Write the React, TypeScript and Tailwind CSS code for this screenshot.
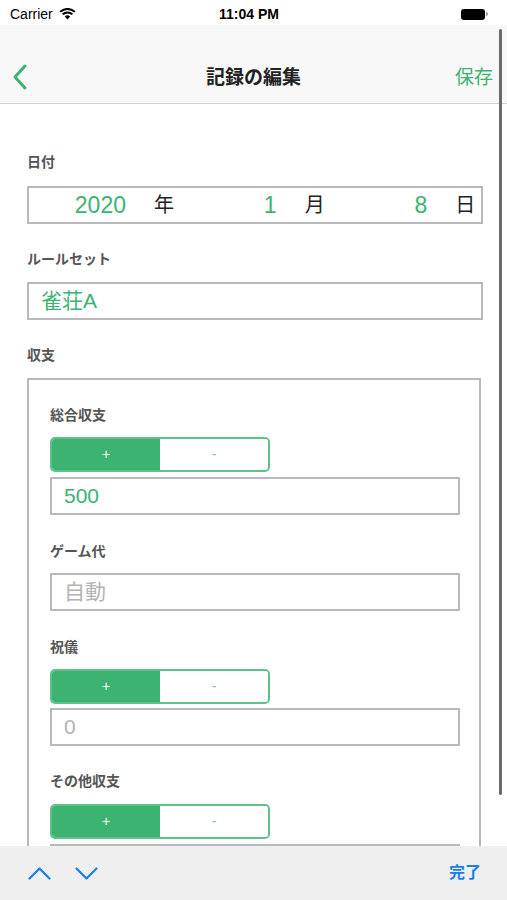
const font = { fontFamily: '"Liberation Sans", "Noto Sans CJK JP", sans-serif' };

function Label({ text }: { text: string }): React.ReactNode {
  return <div className="h-4 text-[14px] leading-4 font-bold text-[#555]">{text}</div>;
}

function Field({ value, placeholder }: { value?: string; placeholder?: string }): React.ReactNode {
  return (
    <div className="flex h-[38px] items-center border-2 border-[#b9b9b9] px-3 text-[21px]">
      {value ? <span className="text-[#3cb371]">{value}</span> : <span className="text-[#b3b3b3]">{placeholder}</span>}
    </div>
  );
}

function Sign(): React.ReactNode {
  return (
    <div className="flex h-[35px] w-[220px] overflow-hidden rounded-[5px] border-2 border-[#5cc28a]">
      <div className="flex flex-1 items-center justify-center bg-[#3cb371] text-[14px] text-white">+</div>
      <div className="flex flex-1 items-center justify-center bg-white text-[14px] text-[#6cc497]">-</div>
    </div>
  );
}

function DatePart({ num, unit }: { num: string; unit: string }): React.ReactNode {
  return (
    <div className="flex items-center">
      <span className="w-[97px] text-right text-[23px] text-[#3cb371]">{num}</span>
      <span className="ml-[28px] text-[20px] text-[#222]">{unit}</span>
    </div>
  );
}

export default function App(): React.ReactNode {
  return (
    <div className="relative flex h-[900px] w-[507px] flex-col overflow-hidden bg-white" style={font}>
      {/* status bar */}
      <div className="flex h-[25px] items-center bg-white px-[10px] pt-[3px] text-[14px] text-black">
        <div className="flex flex-1 items-center gap-[6px]">
          <span>Carrier</span>
          <svg width="17" height="12" viewBox="0 0 17 12">
            <path d="M8.5 11.5 L5.8 8.6 A4 4 0 0 1 11.2 8.6 Z" fill="#000" />
            <path d="M3.6 6.4 A7 7 0 0 1 13.4 6.4" stroke="#000" strokeWidth="2" fill="none" />
            <path d="M1.2 3.9 A10.5 10.5 0 0 1 15.8 3.9" stroke="#000" strokeWidth="2" fill="none" />
          </svg>
        </div>
        <span className="font-bold">11:04 PM</span>
        <div className="flex flex-1 items-center justify-end pr-[9px]">
          <div className="h-[11px] w-[24px] rounded-[3px] bg-black" />
          <div className="ml-[1px] h-[4px] w-[2px] rounded-r-sm bg-[#999]" />
        </div>
      </div>

      {/* nav bar */}
      <div className="border-b border-[#cfcfcf] bg-[#f8f8f8] pt-[31px] pb-[3px]">
        <div className="relative flex h-[44px] items-center px-[12px]">
          <svg width="16" height="26" viewBox="0 0 16 26" className="-mt-[2px] text-[#3cb371]">
            <path d="M13 2 L3 13 L13 24" stroke="currentColor" strokeWidth="3" fill="none" strokeLinecap="round" strokeLinejoin="round" />
          </svg>
          <div className="absolute inset-0 flex items-center justify-center text-[19px] font-bold text-[#222]">記録の編集</div>
          <div className="ml-auto pr-[2px] text-[19px] text-[#3cb371]">保存</div>
        </div>
      </div>

      {/* content */}
      <div className="relative flex-1 overflow-hidden">
        <div className="pt-[50px] pr-[24px] pl-[27px]">
          <Label text="日付" />
          <div className="mt-4 grid h-[38px] grid-cols-3 items-center border-2 border-[#b9b9b9]">
            <DatePart num="2020" unit="年" />
            <DatePart num="1" unit="月" />
            <DatePart num="8" unit="日" />
          </div>

          <div className="mt-[27px]">
            <Label text="ルールセット" />
          </div>
          <div className="mt-[15px]">
            <Field value="雀荘A" />
          </div>

          <div className="mt-[27px]">
            <Label text="収支" />
          </div>
          <div className="mt-[15px] mr-[2px] border-2 border-[#b9b9b9] pt-[27px] pr-[19px] pl-[21px] pb-10">
            <Label text="総合収支" />
            <div className="mt-[14px]">
              <Sign />
            </div>
            <div className="mt-[5px]">
              <Field value="500" />
            </div>

            <div className="mt-[28px]">
              <Label text="ゲーム代" />
            </div>
            <div className="mt-[14px]">
              <Field placeholder="自動" />
            </div>

            <div className="mt-[28px]">
              <Label text="祝儀" />
            </div>
            <div className="mt-[14px]">
              <Sign />
            </div>
            <div className="mt-[4px]">
              <Field placeholder="0" />
            </div>

            <div className="mt-[27px]">
              <Label text="その他収支" />
            </div>
            <div className="mt-[15px]">
              <Sign />
            </div>
            <div className="mt-[5px]">
              <Field placeholder="" />
            </div>
          </div>
        </div>
      </div>

      {/* keyboard toolbar */}
      <div className="flex h-[54px] items-center bg-[#efefef] pr-[26px] pl-[28px]">
        <svg width="23" height="13" viewBox="0 0 23 13" className="text-[#1a7fe8]">
          <path d="M1.5 11.5 L11.5 1.5 L21.5 11.5" stroke="currentColor" strokeWidth="2.2" fill="none" strokeLinecap="round" strokeLinejoin="round" />
        </svg>
        <svg width="23" height="13" viewBox="0 0 23 13" className="ml-[24px] text-[#1a7fe8]">
          <path d="M1.5 1.5 L11.5 11.5 L21.5 1.5" stroke="currentColor" strokeWidth="2.2" fill="none" strokeLinecap="round" strokeLinejoin="round" />
        </svg>
        <div className="ml-auto text-[16px] font-bold text-[#1a7fe8]">完了</div>
      </div>

      {/* scroll indicator */}
      <div className="absolute top-[29px] left-[499px] h-[766px] w-[3px] rounded-full bg-[#6b6b6b]" />
    </div>
  );
}
